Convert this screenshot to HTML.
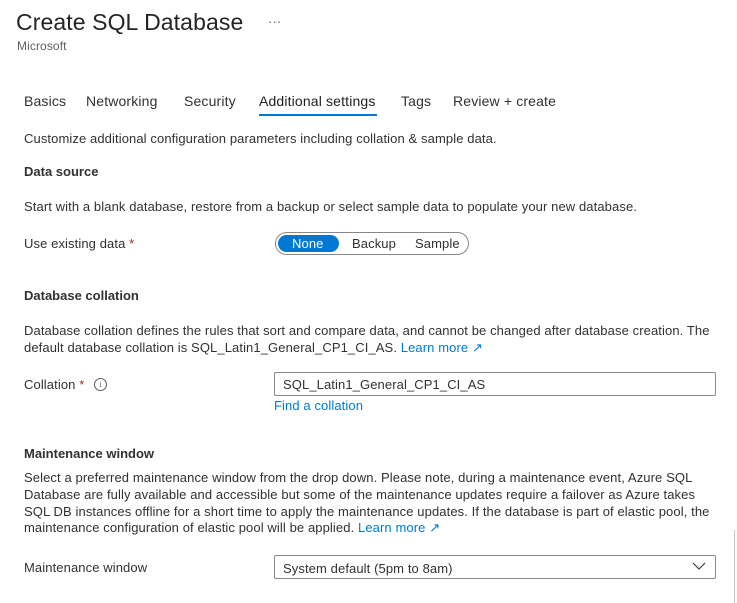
<!DOCTYPE html>
<html><head><meta charset="utf-8"><style>
body{margin:0;width:737px;height:603px;background:#fff;font-family:"Liberation Sans",sans-serif;color:#323130;position:relative;overflow:hidden}
.a{position:absolute;white-space:nowrap;font-size:13px;line-height:16px;letter-spacing:0.1px}
.t{font-size:14px;letter-spacing:0.15px}
.h{font-weight:bold;color:#323130;font-size:13px;letter-spacing:0}
.lnk{color:#0078d4}
.req{color:#a4262c}
.box{position:absolute;border:1px solid #8a8886;border-radius:2px;box-sizing:border-box}
</style></head><body>
<div class="a" style="left:16px;top:7px;font-size:23px;line-height:30px;color:#252423;letter-spacing:0.1px">Create SQL Database</div>
<div class="a" style="left:268px;top:14px;color:#605e5c">···</div>
<div class="a" style="left:17px;top:38px;font-size:12px;color:#605e5c">Microsoft</div>

<div class="a t" style="left:24px;top:93px">Basics</div>
<div class="a t" style="left:86px;top:93px">Networking</div>
<div class="a t" style="left:184px;top:93px">Security</div>
<div class="a t" style="left:259px;top:93px;color:#201f1e">Additional settings</div>
<div style="position:absolute;left:259px;top:114px;width:118px;height:2px;background:#0078d4"></div>
<div class="a t" style="left:401px;top:93px">Tags</div>
<div class="a t" style="left:453px;top:93px">Review + create</div>

<div class="a" style="left:24px;top:131px">Customize additional configuration parameters including collation &amp; sample data.</div>
<div class="a h" style="left:24px;top:164px">Data source</div>
<div class="a" style="left:24px;top:199px">Start with a blank database, restore from a backup or select sample data to populate your new database.</div>
<div class="a" style="left:24px;top:236px">Use existing data <span class="req">*</span></div>
<div style="position:absolute;left:275px;top:232px;width:194px;height:23px;border:1px solid #8a8886;border-radius:12px;box-sizing:border-box"></div>
<div style="position:absolute;left:278px;top:235px;width:61px;height:17px;background:#0078d4;border-radius:9px"></div>
<div class="a" style="left:292px;top:236px;color:#fff">None</div>
<div class="a" style="left:352px;top:236px">Backup</div>
<div class="a" style="left:415px;top:236px">Sample</div>

<div class="a h" style="left:24px;top:288px">Database collation</div>
<div class="a" style="left:24px;top:323px">Database collation defines the rules that sort and compare data, and cannot be changed after database creation. The</div>
<div class="a" style="left:24px;top:340px">default database collation is SQL_Latin1_General_CP1_CI_AS. <span class="lnk">Learn more ↗</span></div>

<div class="a" style="left:24px;top:377px">Collation <span class="req">*</span></div>
<div style="position:absolute;left:94px;top:378px;width:11px;height:11px;border:1px solid #605e5c;border-radius:50%;font-size:8px;line-height:11px;text-align:center;color:#605e5c;font-family:'Liberation Serif',serif">i</div>
<div class="box" style="left:274px;top:372px;width:442px;height:24px"></div>
<div class="a" style="left:283px;top:377px">SQL_Latin1_General_CP1_CI_AS</div>
<div class="a lnk" style="left:274px;top:398px">Find a collation</div>

<div class="a h" style="left:24px;top:446px">Maintenance window</div>
<div class="a" style="left:24px;top:470px">Select a preferred maintenance window from the drop down. Please note, during a maintenance event, Azure SQL</div>
<div class="a" style="left:24px;top:487px">Database are fully available and accessible but some of the maintenance updates require a failover as Azure takes</div>
<div class="a" style="left:24px;top:504px;letter-spacing:0.1px">SQL DB instances offline for a short time to apply the maintenance updates. If the database is part of elastic pool, the</div>
<div class="a" style="left:24px;top:520px">maintenance configuration of elastic pool will be applied. <span class="lnk">Learn more ↗</span></div>

<div class="a" style="left:24px;top:560px">Maintenance window</div>
<div class="box" style="left:274px;top:555px;width:442px;height:24px"></div>
<div class="a" style="left:283px;top:561px">System default (5pm to 8am)</div>
<svg style="position:absolute;left:692px;top:561px" width="14" height="10"><path d="M1 2 L7 8 L13 2" fill="none" stroke="#323130" stroke-width="1.1"/></svg>
<div style="position:absolute;left:734px;top:530px;width:1px;height:73px;background:#c8c6c4"></div>
</body></html>
